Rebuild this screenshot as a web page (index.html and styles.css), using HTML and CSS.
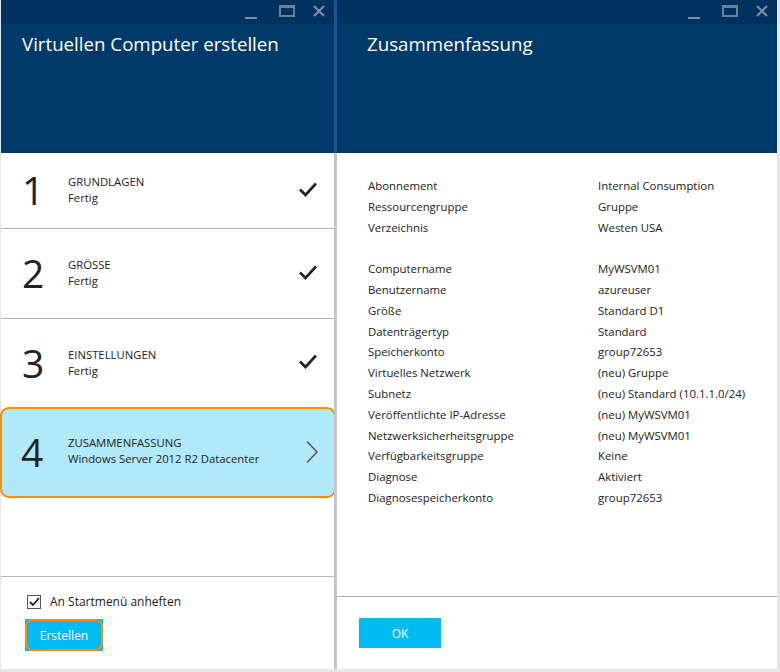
FILE: index.html
```html
<!DOCTYPE html>
<html lang="de">
<head>
<meta charset="utf-8">
<title>Virtuellen Computer erstellen</title>
<link rel="stylesheet" href="styles.css">
</head>
<body>
<div class="desk">
  <section class="blade blade-left">
    <header class="blade-head">
      <div class="chrome">
        <span class="ctl ctl-min"></span>
        <span class="ctl ctl-max"></span>
        <svg class="ctl-close" width="12" height="12" viewBox="0 0 12 12"><path d="M1 1 L11 11 M11 1 L1 11" stroke="#7a8ea6" stroke-width="2.2" fill="none"/></svg>
      </div>
      <h1 class="blade-title">Virtuellen Computer erstellen</h1>
    </header>
    <div class="steps">
      <div class="step step-1">
        <div class="num">1</div>
        <div class="info"><div class="st">GRUNDLAGEN</div><div class="sub">Fertig</div></div>
        <svg class="check" width="20" height="16" viewBox="0 0 20 16"><path d="M2 8.5 L7.5 14 L18 2.5" stroke="#222" stroke-width="2.6" fill="none"/></svg>
      </div>
      <div class="step step-2">
        <div class="num">2</div>
        <div class="info"><div class="st">GRÖSSE</div><div class="sub">Fertig</div></div>
        <svg class="check" width="20" height="16" viewBox="0 0 20 16"><path d="M2 8.5 L7.5 14 L18 2.5" stroke="#222" stroke-width="2.6" fill="none"/></svg>
      </div>
      <div class="step step-3">
        <div class="num">3</div>
        <div class="info"><div class="st">EINSTELLUNGEN</div><div class="sub">Fertig</div></div>
        <svg class="check" width="20" height="16" viewBox="0 0 20 16"><path d="M2 8.5 L7.5 14 L18 2.5" stroke="#222" stroke-width="2.6" fill="none"/></svg>
      </div>
      <div class="step step-4 active">
        <div class="num">4</div>
        <div class="info"><div class="st">ZUSAMMENFASSUNG</div><div class="sub">Windows Server 2012 R2 Datacenter</div></div>
        <svg class="chev" width="14" height="24" viewBox="0 0 14 24"><path d="M2 1.5 L12 12 L2 22.5" stroke="#555" stroke-width="1.5" fill="none"/></svg>
      </div>
    </div>
    <footer class="blade-foot left-foot">
      <label class="pin"><span class="box"><svg width="11" height="10" viewBox="0 0 11 10"><path d="M1 5 L4 8 L10 1" stroke="#222" stroke-width="1.8" fill="none"/></svg></span>An Startmenü anheften</label>
      <span class="create-wrap"><button class="btn create">Erstellen</button></span>
    </footer>
  </section>
  <div class="divider"></div>
  <section class="blade blade-right">
    <header class="blade-head">
      <div class="chrome">
        <span class="ctl ctl-min"></span>
        <span class="ctl ctl-max"></span>
        <svg class="ctl-close" width="12" height="12" viewBox="0 0 12 12"><path d="M1 1 L11 11 M11 1 L1 11" stroke="#7a8ea6" stroke-width="2.2" fill="none"/></svg>
      </div>
      <h1 class="blade-title title-right">Zusammenfassung</h1>
    </header>
    <div class="summary">
      <dl class="grid">
        <dt>Abonnement</dt><dd>Internal Consumption</dd>
        <dt>Ressourcengruppe</dt><dd>Gruppe</dd>
        <dt>Verzeichnis</dt><dd>Westen USA</dd>
        <dt class="gap"></dt><dd class="gap"></dd>
        <dt>Computername</dt><dd>MyWSVM01</dd>
        <dt>Benutzername</dt><dd>azureuser</dd>
        <dt>Größe</dt><dd>Standard D1</dd>
        <dt>Datenträgertyp</dt><dd>Standard</dd>
        <dt>Speicherkonto</dt><dd>group72653</dd>
        <dt>Virtuelles Netzwerk</dt><dd>(neu) Gruppe</dd>
        <dt>Subnetz</dt><dd>(neu) Standard (10.1.1.0/24)</dd>
        <dt>Veröffentlichte IP-Adresse</dt><dd>(neu) MyWSVM01</dd>
        <dt>Netzwerksicherheitsgruppe</dt><dd>(neu) MyWSVM01</dd>
        <dt>Verfügbarkeitsgruppe</dt><dd>Keine</dd>
        <dt>Diagnose</dt><dd>Aktiviert</dd>
        <dt>Diagnosespeicherkonto</dt><dd>group72653</dd>
      </dl>
    </div>
    <footer class="blade-foot right-foot">
      <button class="btn ok">OK</button>
    </footer>
  </section>
</div>
</body>
</html>
```
FILE: styles.css
```css
* { box-sizing: border-box; }
html, body { margin: 0; padding: 0; }
body {
  background: #e6e6e6;
  font-family: "Open Sans", "Noto Sans", "Liberation Sans", sans-serif;
  color: #222;
  width: 780px;
  height: 672px;
  overflow: hidden;
}
.desk {
  display: flex;
  height: 669px;
  width: 777px;
}
.blade {
  display: flex;
  flex-direction: column;
  background: #fff;
  height: 100%;
}
.blade-left { width: 334px; border-left: 1px solid #e4e4e4; }
.divider {
  width: 3px;
  background: linear-gradient(#1d5590 0, #1d5590 153px, #c4c4c4 153px);
}
.blade-right { width: 440px; }

.blade-head {
  height: 153px;
  background: #003a6b;
  flex: none;
}
.chrome {
  height: 24px;
  background: #00325f;
  display: flex;
  justify-content: flex-end;
  align-items: center;
  padding-right: 9px;
}
.ctl { display: block; }
.ctl-min {
  width: 12px; height: 2px; background: #7f8ea0;
  margin-top: 12px; margin-right: 22px;
}
.ctl-max {
  width: 16px; height: 12px; border: 2px solid #6d7f96; border-top-width: 3px;
  margin-right: 18px; margin-top: -2px;
}
.ctl-close { margin-top: -2px; }
.blade-title {
  margin: 0;
  padding: 7px 0 0 21px;
  font-weight: 400;
  font-size: 18.7px;
  color: #fff;
  letter-spacing: 0;
}
.title-right { padding-left: 30px; }

.steps { flex: 1; }
.step {
  display: flex;
  align-items: center;
  border-bottom: 1px solid #b4b4b4;
}
.step-1 { height: 76px; }
.step-2 { height: 90px; }
.step-3 { height: 88px; border-bottom: none; }
.step-4 { height: 91px; }
.step .num {
  width: 67px;
  padding-left: 21px;
  font-size: 39px;
  line-height: 1;
  color: #222;
  font-weight: 400;
  margin-top: -2px;
}
.step .info { flex: 1; font-size: 11.3px; line-height: 16px; margin-top: -1px; }
.step .check { margin-right: 16px; margin-top: -4px; }
.step.active {
  background: #b2e9f8;
  border: 2.5px solid #ff8c00;
  border-radius: 9px;
  margin-left: -1px;
  margin-right: -2px;
}
.step.active .num { padding-left: 19px; width: 66px; }
.step.active .info { margin-top: -3px; }
.step.active .chev { margin-right: 15px; margin-top: -2px; }

.blade-foot { flex: none; border-top: 1px solid #b4b4b4; }
.left-foot {
  height: 93px;
  padding: 16px 0 0 26px;
  border-top-color: #b8b8b8;
}
.pin {
  display: flex; align-items: center;
  font-size: 12px; color: #222;
}
.pin .box {
  width: 14px; height: 14px; border: 1px solid #555; margin-right: 9px;
  display: flex; align-items: center; justify-content: center;
  background: #fff;
}
.create-wrap {
  display: inline-block;
  margin-top: 9px;
  margin-left: -2px;
  background: #00bcf2;
  line-height: 0;
}
.btn {
  font-family: inherit;
  color: #fff;
  background: #00bcf2;
  font-size: 12px;
  cursor: pointer;
}
.create {
  width: 78px; height: 32px;
  border: 2.5px solid #ff8c00;
  border-radius: 8px;
  padding: 0;
}
.summary { flex: 1; padding: 23px 0 0 31px; }
.grid {
  margin: 0;
  display: grid;
  grid-template-columns: 230px 1fr;
  grid-auto-rows: 20.8px;
  font-size: 11.4px;
  line-height: 20.8px;
  color: #222;
}
.grid dt, .grid dd { margin: 0; white-space: nowrap; }
.right-foot {
  height: 73px;
  padding: 21px 0 0 22px;
  border-top-color: #b0b0b0;
}
.ok {
  width: 82px; height: 30px; border: none; padding: 0;
}
```
